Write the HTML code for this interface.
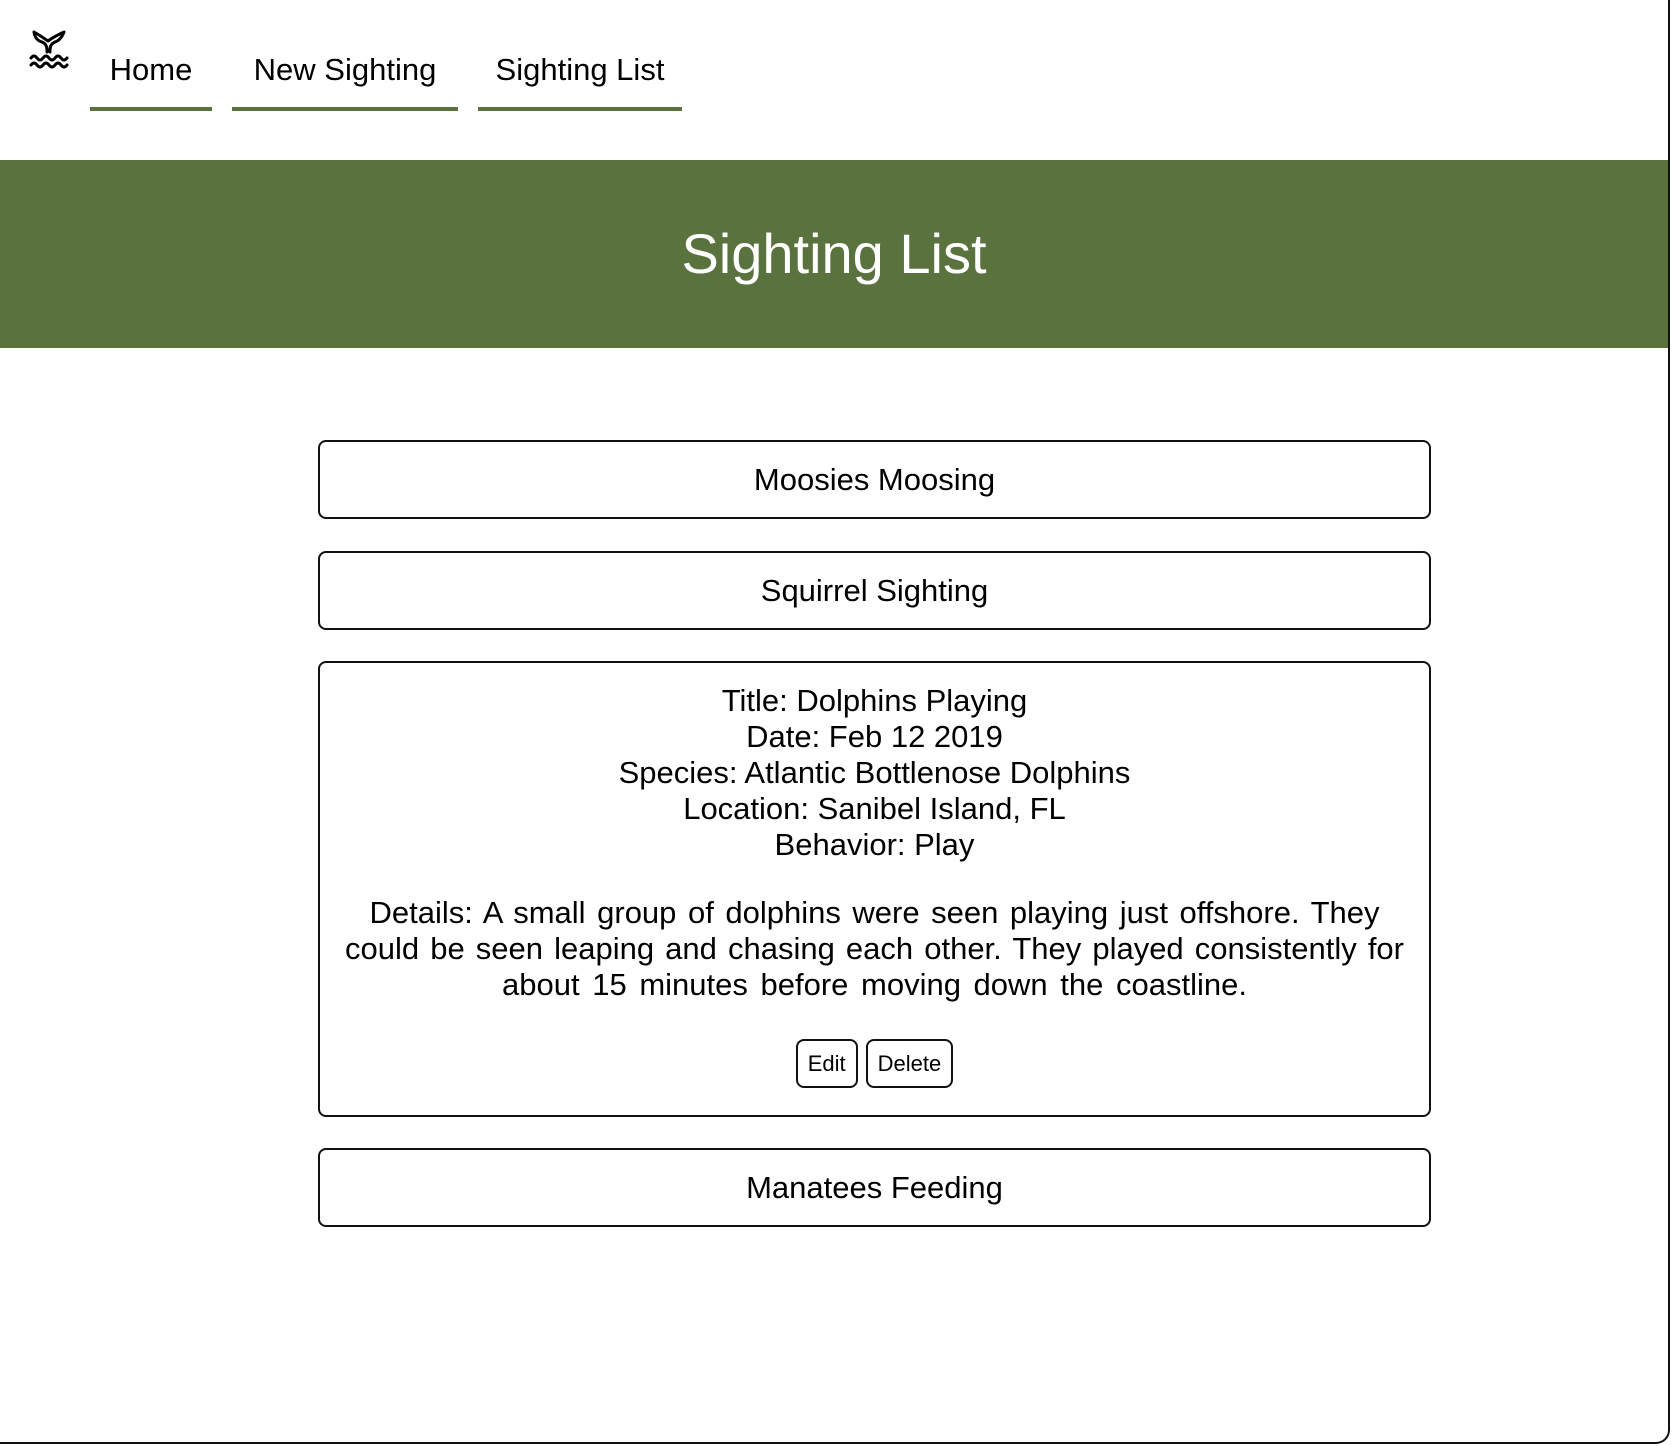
<!DOCTYPE html>
<html><head><meta charset="utf-8"><style>
html,body{margin:0;padding:0;}
body{width:1672px;height:1446px;position:relative;overflow:hidden;background:#fff;font-family:"Liberation Sans",sans-serif;color:#000;}
.frame{position:absolute;left:0;top:0;width:1668px;height:1442px;border-right:2px solid #111;border-bottom:2px solid #111;border-bottom-right-radius:14px;}
.nav a{position:absolute;top:48px;font-size:31px;color:#000;text-decoration:none;text-align:center;height:59px;border-bottom:4px solid #5a723e;line-height:44px;box-sizing:content-box;}
.banner{position:absolute;left:0;top:160px;width:1668px;height:188px;background:#5a723e;color:#fff;font-size:56px;text-align:center;line-height:188px;}
.card{position:absolute;left:318px;width:1113px;border:2px solid #111;border-radius:8px;box-sizing:border-box;text-align:center;font-size:31px;}
.single{height:79px;line-height:75px;}
.det{top:661px;height:456px;padding:20px 24px 0;line-height:36px;}
.det p{margin:0;}
.d{margin-top:32px;}
.d div{margin:0 auto;}
.j{text-align:justify;text-align-last:justify;}
.btns{margin-top:36px;}
.btn{display:inline-block;border:2px solid #111;border-radius:8px;font-size:22px;line-height:45px;height:45px;padding:0 10px;margin:0 4px;vertical-align:top;}
</style></head><body>
<div class="frame"></div>
<svg style="position:absolute;left:29px;top:30px" width="42" height="42" viewBox="0 0 42 42" fill="none" stroke="#000" stroke-width="3" stroke-linecap="round" stroke-linejoin="round">
<path d="M5 2 Q6 10 13 12 Q18 14 18 20 L18 22 M35 2 Q32 10 26 12 Q21 14 21 20 L21 22 M5 2 Q12 6 19 11 Q26 6 35 2"/>
<path d="M2 28 q3 -4 6 0 t6 0 t6 0 t6 0 t6 0 t6 0"/>
<path d="M2 35 q3 -4 6 0 t6 0 t6 0 t6 0 t6 0 t6 0"/>
</svg>
<div class="nav">
<a style="left:90px;width:122px">Home</a>
<a style="left:232px;width:226px">New Sighting</a>
<a style="left:478px;width:204px">Sighting List</a>
</div>
<div class="banner">Sighting List</div>
<div class="card single" style="top:440px">Moosies Moosing</div>
<div class="card single" style="top:551px">Squirrel Sighting</div>
<div class="card det">
<p>Title: Dolphins Playing</p>
<p>Date: Feb 12 2019</p>
<p>Species: Atlantic Bottlenose Dolphins</p>
<p>Location: Sanibel Island, FL</p>
<p>Behavior: Play</p>
<div class="d">
<div class="j" style="width:1010px">Details: A small group of dolphins were seen playing just offshore. They</div>
<div class="j" style="width:1059px">could be seen leaping and chasing each other. They played consistently for</div>
<div style="word-spacing:4px">about 15 minutes before moving down the coastline.</div>
</div>
<div class="btns"><span class="btn">Edit</span><span class="btn">Delete</span></div>
</div>
<div class="card single" style="top:1148px">Manatees Feeding</div>
</body></html>
